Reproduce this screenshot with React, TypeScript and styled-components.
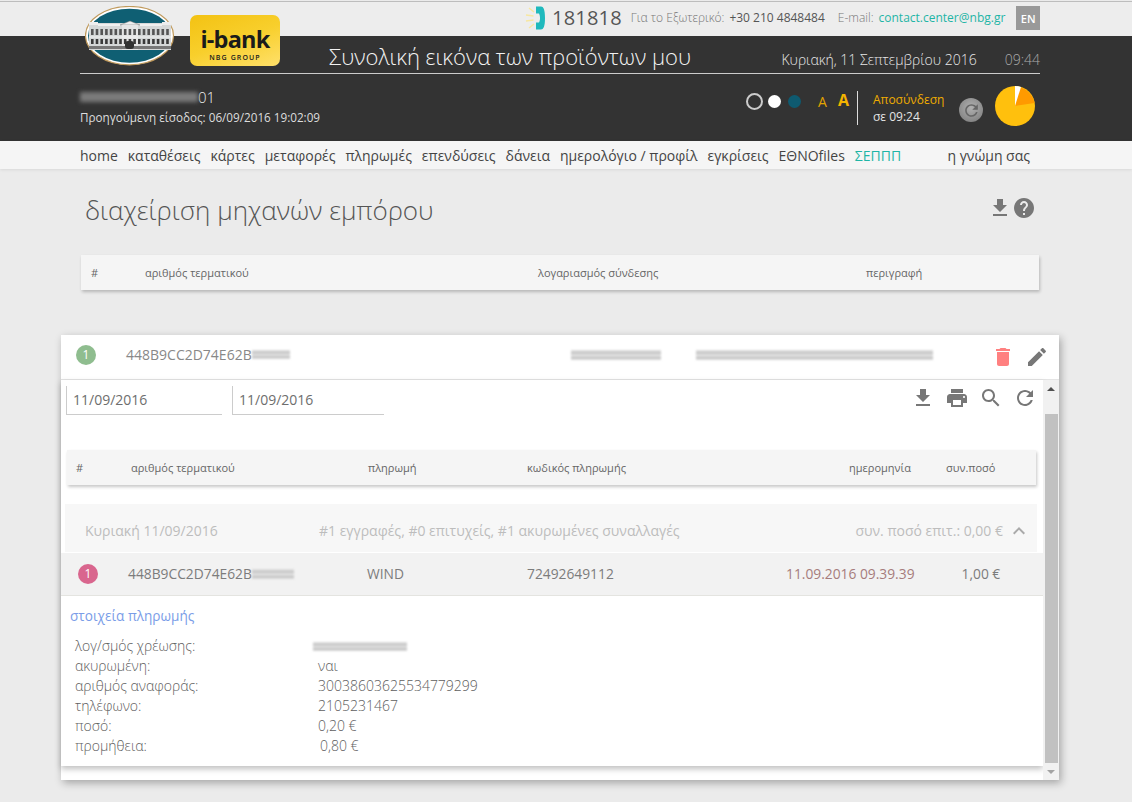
import React from "react";
import styled, { createGlobalStyle } from "styled-components";

const Global = createGlobalStyle`
  html, body { margin: 0; padding: 0; background: #ebebeb; }
  body { font-family: "Open Sans", "Noto Sans", sans-serif; color: #555; overflow: hidden; }
  * { box-sizing: border-box; }
`;

const Page = styled.div`
  position: relative;
  width: 1132px;
  height: 802px;
  overflow: hidden;
  background: #ebebeb;
`;

const TopStrip = styled.div`
  height: 36px;
  margin-top: 1px;
  margin-bottom: -1px;
  border-top: 1px solid #bdbdbd;
  padding: 0 92px 4px 525px;
  display: flex;
  align-items: center;
  background: #ededed;
  font-size: 12px;
`;
const Phone = styled.span`
  font-size: 20px;
  color: #555;
  margin: 0 9px 0 7px;
  letter-spacing: 0.2px;
`;
const Dim = styled.span`
  font-size: 12px;
  font-weight: 300;
  color: #777;
  margin-right: 5px;
  white-space: nowrap;
`;
const Dark = styled.span`
  color: #555;
  margin-right: 13px;
  white-space: nowrap;
`;
const Mail = styled.span`
  color: #1fb5a6;
  white-space: nowrap;
  margin-right: 11px;
`;
const Lang = styled.span`
  width: 24px;
  height: 24px;
  margin-top: 1px;
  background: #999;
  color: #fff;
  font-size: 11px;
  font-weight: 600;
  display: flex;
  align-items: center;
  justify-content: center;
`;

const Logos = styled.div`
  position: absolute;
  left: 85px;
  top: 6px;
  display: flex;
  align-items: flex-start;
  gap: 15px;
`;
const IBank = styled.div`
  width: 90px;
  height: 51px;
  margin-top: 9px;
  border-radius: 7px;
  background: linear-gradient(160deg, #f3c213 0%, #f8cf2c 50%, #ffe06a 100%);
  color: #1b1b1b;
  display: flex;
  flex-direction: column;
  align-items: center;
  padding-top: 11px;
`;
const IBankName = styled.span`
  font-size: 23.5px;
  line-height: 26px;
  font-weight: 700;
  letter-spacing: -0.8px;
`;
const IBankSub = styled.span`
  font-size: 7px;
  line-height: 10px;
  margin-top: 1px;
  font-weight: 600;
  letter-spacing: 1.1px;
`;

const Header = styled.header`
  height: 105px;
  background: #333;
  padding: 0 92px 0 80px;
  color: #fff;
`;
const HeaderTop = styled.div`
  height: 38px;
  border-bottom: 1px solid #ccc;
  padding: 2px 0 0 249px;
  display: flex;
  align-items: center;
`;
const PageTitle = styled.h1`
  margin: 0;
  flex: 1;
  font-size: 22px;
  line-height: 28px;
  font-weight: 300;
  color: #f2f2f2;
  white-space: nowrap;
`;
const DateText = styled.span`
  font-size: 14px;
  font-weight: 300;
  color: #e8e8e8;
  margin-top: 8px;
`;
const TimeText = styled.span`
  font-size: 14px;
  font-weight: 300;
  color: #aaa;
  margin: 8px 0 0 28px;
`;
const HeaderBottom = styled.div`
  display: flex;
  justify-content: space-between;
  padding-top: 13px;
`;
const User = styled.div`
  display: flex;
  flex-direction: column;
`;
const UserLine = styled.div`
  display: flex;
  align-items: center;
  height: 20px;
  font-size: 15px;
  font-weight: 300;
  color: #eee;
`;
const LastLogin = styled.div`
  font-size: 11.7px;
  line-height: 18px;
  color: #ddd;
  margin-top: 1px;
`;
const Smear = styled.span<{ $w: number; $h: number; $c: string; $blur?: number; $ml?: number }>`
  display: inline-block;
  width: ${(p) => p.$w}px;
  height: ${(p) => p.$h}px;
  margin-left: ${(p) => p.$ml ?? 0}px;
  background: ${(p) => p.$c};
  filter: blur(${(p) => p.$blur ?? 2}px);
  flex: none;
`;
const Controls = styled.div`
  display: flex;
  align-items: flex-start;
  margin-right: 5px;
  margin-top: -1px;
`;
const Dot = styled.span<{ $c: string; $ring?: boolean }>`
  width: ${(p) => (p.$ring ? 17 : 13)}px;
  height: ${(p) => (p.$ring ? 17 : 13)}px;
  margin: ${(p) => (p.$ring ? "7px 5px 0 0" : "9px 7px 0 0")};
  border-radius: 50%;
  background: ${(p) => (p.$ring ? "transparent" : p.$c)};
  border: ${(p) => (p.$ring ? `2px solid ${p.$c}` : "none")};
`;
const FontA = styled.span<{ $big?: boolean }>`
  color: ${(p) => (p.$big ? "#f4b400" : "#e2a400")};
  font-size: ${(p) => (p.$big ? 16 : 14)}px;
  font-weight: ${(p) => (p.$big ? 700 : 400)};
  line-height: 22px;
  margin: ${(p) => (p.$big ? "3px 8px 0 11px" : "5px 0 0 10px")};
`;
const Session = styled.div`
  border-left: 1px solid #ddd;
  height: 34px;
  padding-left: 15px;
  margin-top: 5px;
  width: 102px;
`;
const Logout = styled.div`
  color: #f0ad00;
  font-size: 12px;
  line-height: 18px;
`;
const Remain = styled.div`
  color: #e5e5e5;
  font-size: 12px;
  line-height: 16px;
`;
const RefreshBtn = styled.span`
  width: 24px;
  height: 24px;
  margin: 12px 12px 0 0;
  border-radius: 50%;
  background: radial-gradient(circle at 50% 40%, #b0b0b0, #787878);
  display: flex;
  align-items: center;
  justify-content: center;
`;

const Nav = styled.nav`
  position: relative;
  height: 28px;
  background: #f5f5f5;
  box-shadow: 0 1px 3px rgba(0, 0, 0, 0.08);
  padding: 0 102px 0 80px;
  display: flex;
  align-items: center;
  gap: 9.9px;
  font-size: 14px;
  color: #444;
  white-space: nowrap;
  & > span:last-child { margin-left: auto; }
`;
const Accent = styled.span`
  color: #1fb5a6;
`;

const Main = styled.main`
  padding: 0 73px 0 61px;
`;
const TitleRow = styled.div`
  display: flex;
  align-items: center;
  justify-content: space-between;
  padding: 0 23px 0 24px;
  height: 86px;
`;
const Title = styled.h2`
  margin: -4px 0 0;
  font-size: 26px;
  line-height: 40px;
  font-weight: 300;
  color: #555;
`;
const Tools = styled.div`
  display: flex;
  align-items: center;
  margin-top: -8px;
`;
const IconSvg = styled.svg`
  display: block;
  flex: none;
`;

const HeadCard = styled.div<{ $cols: string }>`
  display: grid;
  grid-template-columns: ${(p) => p.$cols};
  align-items: center;
  height: 35px;
  background: #f5f5f5;
  box-shadow: 1px 2px 3px rgba(0, 0, 0, 0.22);
  font-size: 11px;
  color: #666;
  white-space: nowrap;
`;
const TopHead = styled(HeadCard)`
  margin: 0 20px;
  padding-left: 10px;
`;

const Card = styled.section`
  margin-top: 45px;
  height: 445px;
  background: #fff;
  box-shadow: 2px 3px 8px rgba(0, 0, 0, 0.3);
  display: flex;
  flex-direction: column;
`;
const CardHead = styled.div`
  height: 45px;
  flex: none;
  border-bottom: 1px solid #e4e4e4;
  padding: 0 10px 5px 15px;
  display: flex;
  align-items: center;
  font-size: 14px;
  color: #888;
`;
const Badge = styled.span<{ $c: string }>`
  width: 20px;
  height: 20px;
  border-radius: 50%;
  background: ${(p) => p.$c};
  color: #fff;
  font-size: 12px;
  display: flex;
  align-items: center;
  justify-content: center;
  flex: none;
`;
const HeadValue = styled.span`
  margin-left: 30px;
`;
const HeadTools = styled.div`
  margin-left: auto;
  margin-top: 5px;
  display: flex;
  gap: 10px;
`;
const Body = styled.div`
  flex: 1;
  min-height: 0;
  display: flex;
`;
const Scroller = styled.div`
  flex: 1;
  min-width: 0;
`;
const Content = styled.div`
  height: 386px;
  background: #fff;
  box-shadow: 0 3px 6px rgba(0, 0, 0, 0.25);
`;
const FilterRow = styled.div`
  display: flex;
  padding: 6px 6px 0 5px;
  height: 70px;
`;
const DateField = styled.div<{ $w: number }>`
  width: ${(p) => p.$w}px;
  height: 29px;
  margin-right: 10px;
  border-left: 1px solid #ccc;
  border-bottom: 1px solid #ccc;
  padding-left: 6px;
  font-size: 14px;
  line-height: 28px;
  color: #6e6e6e;
`;
const RowTools = styled.div`
  margin-left: auto;
  display: flex;
  gap: 10px;
  height: 24px;
`;
const InnerHead = styled(HeadCard)`
  margin: 0 7px 0 6px;
  padding-left: 9px;
`;
const Group = styled.div`
  margin: 19px 6px 0 4px;
  height: 48px;
  padding: 5px 0 0 20px;
  background: #f7f7f7;
  display: grid;
  grid-template-columns: 234px 1fr auto 34px;
  align-items: center;
  font-size: 14px;
  color: #bdbdbd;
  white-space: nowrap;
`;
const Chevron = styled.span`
  margin-left: 4px;
`;
const Row = styled.div`
  margin-top: 1px;
  height: 43px;
  background: #f2f2f2;
  border-bottom: 1px solid #e4e4e0;
  display: grid;
  grid-template-columns: 50px 239px 160px 259px 1fr;
  align-items: center;
  padding: 0 0 1px 17px;
  font-size: 13.8px;
  color: #7c7c7c;
  white-space: nowrap;
`;
const RowId = styled.span`
  display: flex;
  align-items: center;
`;
const RowDate = styled.span`
  color: #a67c7c;
`;
const RowAmount = styled.span`
  margin-left: 47px;
`;
const DetailBlock = styled.div`
  padding: 9px 0 0 10px;
`;
const DetailTitle = styled.div`
  font-size: 13.6px;
  line-height: 21px;
  font-weight: 400;
  color: #7a9de8;
  margin: 0 0 10px -1px;
`;
const DetailRow = styled.div`
  display: grid;
  grid-template-columns: 243px 1fr;
  height: 20px;
  padding-left: 4px;
  font-size: 14px;
  line-height: 20px;
  font-weight: 300;
  color: #5e5e5e;
`;
const DetailValue = styled.span<{ $shift?: number }>`
  padding-left: ${(p) => p.$shift ?? 0}px;
  display: flex;
  align-items: center;
`;

const Scrollbar = styled.div`
  width: 16px;
  flex: none;
  background: #f1f1f1;
  display: flex;
  flex-direction: column;
  align-items: center;
`;
const ScrollArrow = styled.div<{ $up?: boolean }>`
  height: 17px;
  flex: none;
  display: flex;
  align-items: center;
  justify-content: center;
  &::before {
    content: "";
    border-left: 4px solid transparent;
    border-right: 4px solid transparent;
    ${(p) => (p.$up ? "border-bottom: 4px solid #505050;" : "border-top: 4px solid #a3a3a3;")}
  }
`;
const ScrollTrack = styled.div`
  flex: 1;
  width: 100%;
  padding-top: 17px;
  display: flex;
  justify-content: center;
`;
const ScrollThumb = styled.div`
  width: 13px;
  background: #c1c1c1;
`;

const PATHS: Record<string, string> = {
  download: "M19 9h-4V3H9v6H5l7 7 7-7zM5 18v2h14v-2H5z",
  help: "M12 2C6.48 2 2 6.48 2 12s4.48 10 10 10 10-4.48 10-10S17.52 2 12 2zm1 17h-2v-2h2v2zm2.07-7.75l-.9.92C13.45 12.9 13 13.5 13 15h-2v-.5c0-1.1.45-2.1 1.17-2.83l1.24-1.26c.37-.36.59-.86.59-1.41 0-1.1-.9-2-2-2s-2 .9-2 2H8c0-2.21 1.79-4 4-4s4 1.79 4 4c0 .88-.36 1.68-.93 2.25z",
  trash: "M6 19c0 1.1.9 2 2 2h8c1.1 0 2-.9 2-2V7H6v12zM19 4h-3.5l-1-1h-5l-1 1H5v2h14V4z",
  edit: "M3 17.25V21h3.75L17.81 9.94l-3.75-3.75L3 17.25zM20.71 7.04c.39-.39.39-1.02 0-1.41l-2.34-2.34c-.39-.39-1.02-.39-1.41 0l-1.83 1.83 3.75 3.75 1.83-1.83z",
  print: "M19 8H5c-1.66 0-3 1.34-3 3v6h4v4h12v-4h4v-6c0-1.66-1.34-3-3-3zm-3 11H8v-5h8v5zm3-7c-.55 0-1-.45-1-1s.45-1 1-1 1 .45 1 1-.45 1-1 1zm-1-9H6v4h12V3z",
  search: "M15.5 14h-.79l-.28-.27C15.41 12.59 16 11.11 16 9.5 16 5.91 13.09 3 9.5 3S3 5.91 3 9.5 5.91 16 9.5 16c1.61 0 3.09-.59 4.23-1.57l.27.28v.79l5 4.99L20.49 19l-4.99-5zm-6 0C7.01 14 5 11.99 5 9.5S7.01 5 9.5 5 14 7.01 14 9.5 11.99 14 9.5 14z",
  refresh: "M17.65 6.35C16.2 4.9 14.21 4 12 4c-4.42 0-7.99 3.58-7.99 8s3.57 8 7.99 8c3.73 0 6.84-2.55 7.73-6h-2.08c-.82 2.33-3.04 4-5.65 4-3.31 0-6-2.69-6-6s2.69-6 6-6c1.66 0 3.14.69 4.22 1.78L13 11h7V4l-2.35 2.35z",
  up: "M12 8l-6 6 1.41 1.41L12 10.83l4.59 4.58L18 14z",
};

const Icon = ({ name, color = "#777", size = 24 }: { name: string; color?: string; size?: number }) => (
  <IconSvg width={size} height={size} viewBox="0 0 24 24" fill={color}>
    <path d={PATHS[name]} />
  </IconSvg>
);

const BankLogo = () => (
  <IconSvg width="90" height="60" viewBox="0 0 90 60">
    <ellipse cx="44.5" cy="29.7" rx="44" ry="29.2" fill="#fff" stroke="#c09a5c" strokeWidth="1.2" />
    <ellipse cx="44.5" cy="29.7" rx="41.5" ry="27" fill="#0f5f73" />
    <rect x="4" y="17" width="82" height="27" fill="#d5d8d8" />
    <rect x="4" y="16" width="9" height="3" fill="#eee" />
    <rect x="77" y="16" width="9" height="3" fill="#eee" />
    <rect x="13" y="18" width="64" height="2" fill="#f0f0f0" />
    <polygon points="35,19 45,15 55,19" fill="#eee" stroke="#777" strokeWidth="0.5" />
    <rect x="37" y="19" width="16" height="25" fill="#e6e6e6" />
    {Array.from({ length: 17 }).map((_, i) => (
      <rect key={`a${i}`} x={6 + i * 4.7} y="23" width="2.6" height="6" fill="#555" />
    ))}
    {Array.from({ length: 17 }).map((_, i) => (
      <rect key={`b${i}`} x={6 + i * 4.7} y="33" width="2.6" height="5" fill="#3a3a3a" />
    ))}
    <rect x="4" y="40" width="82" height="3" fill="#777" />
    <rect x="40" y="35" width="9" height="8" rx="3" fill="#333" />
    <rect x="4" y="30.5" width="82" height="1" fill="#f2f2f2" />
  </IconSvg>
);

const PhoneIcon = () => (
  <IconSvg width="20" height="26" viewBox="0 0 20 26">
    <g stroke="#f7e7a0" strokeWidth="1.4">
      <line x1="9" y1="7" x2="4" y2="3" />
      <line x1="8.5" y1="11" x2="1" y2="10" />
      <line x1="8.5" y1="15" x2="1" y2="16" />
      <line x1="9" y1="19" x2="4" y2="23" />
    </g>
    <path d="M11 1.5h5c2.5 0 4 3 4 11.5s-1.500 11.500-4 11.500h-5v-7h3c.8-1.500 1-3 1-4.500s-.2-3-1-4.500h-3z" fill="#1fb9bd" />
  </IconSvg>
);

const Pie = () => (
  <IconSvg width="40" height="40" viewBox="0 0 40 40">
    <circle cx="20" cy="20" r="20" fill="#ffc00d" />
    <path d="M20 20L24 1A20 20 0 0 1 39.500 17z" fill="#ff9a00" />
    <path d="M20 20L20 0A20 20 0 0 1 26 1z" fill="#fff" />
  </IconSvg>
);

const NAV = ["home", "καταθέσεις", "κάρτες", "μεταφορές", "πληρωμές", "επενδύσεις", "δάνεια", "ημερολόγιο / προφίλ", "εγκρίσεις", "ΕΘΝΟfiles"];

const MAIN_COLS = "54px 393px 328px 1fr";
const INNER_COLS = "55px 237px 159px 322px 97px 1fr";

const smear = "linear-gradient(180deg,#e6e6e6 0%,#c2c2c2 30%,#e8e8e8 55%,#bcbcbc 80%,#e8e8e8 100%)";

export default function App() {
  return (
    <Page>
      <Global />
      <TopStrip>
        <PhoneIcon />
        <Phone>181818</Phone>
        <Dim>Για το Εξωτερικό:</Dim>
        <Dark>+30 210 4848484</Dark>
        <Dim>E-mail:</Dim>
        <Mail>contact.center@nbg.gr</Mail>
        <Lang>EN</Lang>
      </TopStrip>
      <Header>
        <HeaderTop>
          <PageTitle>Συνολική εικόνα των προϊόντων μου</PageTitle>
          <DateText>Κυριακή, 11 Σεπτεμβρίου 2016</DateText>
          <TimeText>09:44</TimeText>
        </HeaderTop>
        <HeaderBottom>
          <User>
            <UserLine>
              <Smear $w={118} $h={10} $c="#7c7c7c" $blur={2} />
              <span>01</span>
            </UserLine>
            <LastLogin>Προηγούμενη είσοδος: 06/09/2016 19:02:09</LastLogin>
          </User>
          <Controls>
            <Dot $ring $c="#ccc" />
            <Dot $c="#fff" />
            <Dot $c="#0e5a70" />
            <FontA>A</FontA>
            <FontA $big>A</FontA>
            <Session>
              <Logout>Αποσύνδεση</Logout>
              <Remain>σε 09:24</Remain>
            </Session>
            <RefreshBtn>
              <Icon name="refresh" color="#666" size={19} />
            </RefreshBtn>
            <Pie />
          </Controls>
        </HeaderBottom>
      </Header>
      <Nav>
        {NAV.map((n) => (
          <span key={n}>{n}</span>
        ))}
        <Accent>ΣΕΠΠΠ</Accent>
        <span>η γνώμη σας</span>
      </Nav>
      <Logos>
        <BankLogo />
        <IBank>
          <IBankName>i-bank</IBankName>
          <IBankSub>NBG GROUP</IBankSub>
        </IBank>
      </Logos>
      <Main>
        <TitleRow>
          <Title>διαχείριση μηχανών εμπόρου</Title>
          <Tools>
            <Icon name="download" />
            <Icon name="help" />
          </Tools>
        </TitleRow>
        <TopHead $cols={MAIN_COLS}>
          <span>#</span>
          <span>αριθμός τερματικού</span>
          <span>λογαριασμός σύνδεσης</span>
          <span>περιγραφή</span>
        </TopHead>
        <Card>
          <CardHead>
            <Badge $c="#8fbd8f">1</Badge>
            <HeadValue>448B9CC2D74E62B</HeadValue>
            <Smear $w={38} $h={9} $c={smear} $blur={1.2} />
            <Smear $w={90} $h={10} $c={smear} $blur={1.2} $ml={281} />
            <Smear $w={237} $h={10} $c={smear} $blur={1.2} $ml={35} />
            <HeadTools>
              <Icon name="trash" color="#ff8080" />
              <Icon name="edit" />
            </HeadTools>
          </CardHead>
          <Body>
            <Scroller>
              <Content>
                <FilterRow>
                  <DateField $w={156}>11/09/2016</DateField>
                  <DateField $w={152}>11/09/2016</DateField>
                  <RowTools>
                    <Icon name="download" />
                    <Icon name="print" />
                    <Icon name="search" />
                    <Icon name="refresh" />
                  </RowTools>
                </FilterRow>
                <InnerHead $cols={INNER_COLS}>
                  <span>#</span>
                  <span>αριθμός τερματικού</span>
                  <span>πληρωμή</span>
                  <span>κωδικός πληρωμής</span>
                  <span>ημερομηνία</span>
                  <span>συν.ποσό</span>
                </InnerHead>
                <Group>
                  <span>Κυριακή 11/09/2016</span>
                  <span>#1 εγγραφές, #0 επιτυχείς, #1 ακυρωμένες συναλλαγές</span>
                  <span>συν. ποσό επιτ.: 0,00 €</span>
                  <Chevron>
                    <Icon name="up" color="#aaa" />
                  </Chevron>
                </Group>
                <Row>
                  <Badge $c="#d9668e">1</Badge>
                  <RowId>
                    448B9CC2D74E62B
                    <Smear $w={42} $h={10} $c={smear} $blur={1.2} />
                  </RowId>
                  <span>WIND</span>
                  <span>72492649112</span>
                  <span>
                    <RowDate>11.09.2016 09.39.39</RowDate>
                    <RowAmount>1,00 €</RowAmount>
                  </span>
                </Row>
                <DetailBlock>
                  <DetailTitle>στοιχεία πληρωμής</DetailTitle>
                  <DetailRow>
                    <span>λογ/σμός χρέωσης:</span>
                    <DetailValue>
                      <Smear $w={94} $h={9} $c={smear} $blur={1.2} $ml={-5} />
                    </DetailValue>
                  </DetailRow>
                  <DetailRow>
                    <span>ακυρωμένη:</span>
                    <DetailValue>ναι</DetailValue>
                  </DetailRow>
                  <DetailRow>
                    <span>αριθμός αναφοράς:</span>
                    <DetailValue>30038603625534779299</DetailValue>
                  </DetailRow>
                  <DetailRow>
                    <span>τηλέφωνο:</span>
                    <DetailValue>2105231467</DetailValue>
                  </DetailRow>
                  <DetailRow>
                    <span>ποσό:</span>
                    <DetailValue>0,20 €</DetailValue>
                  </DetailRow>
                  <DetailRow>
                    <span>προμήθεια:</span>
                    <DetailValue $shift={2}>0,80 €</DetailValue>
                  </DetailRow>
                </DetailBlock>
              </Content>
            </Scroller>
            <Scrollbar>
              <ScrollArrow $up />
              <ScrollTrack>
                <ScrollThumb />
              </ScrollTrack>
              <ScrollArrow />
            </Scrollbar>
          </Body>
        </Card>
      </Main>
    </Page>
  );
}
